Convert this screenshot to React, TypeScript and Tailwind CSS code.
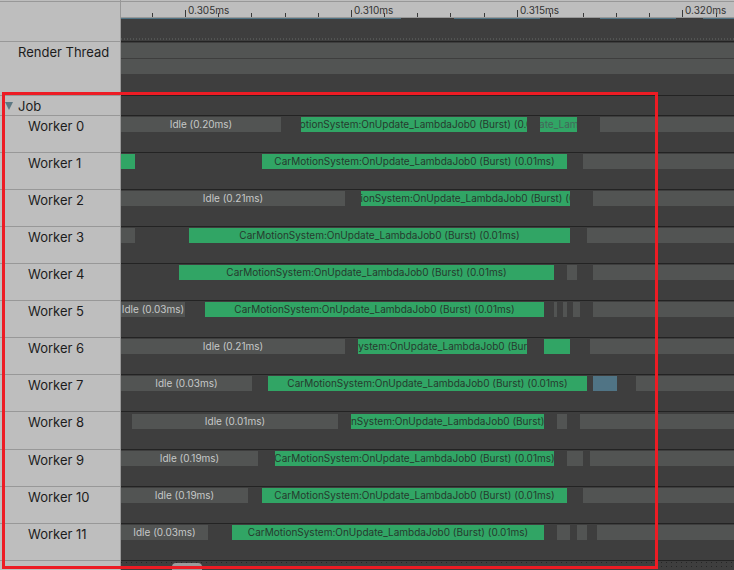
import React from "react";

type Kind = "idle" | "job" | "faint" | "sync";
type Block = { from: number; to?: number; kind: Kind; text?: string };
type Worker = { name: string; blocks: Block[]; tall?: boolean };

const JOB = "CarMotionSystem:OnUpdate_LambdaJob0 (Burst) (0.01ms)";

const idle = (from: number, to?: number, text?: string): Block => ({ from, to, kind: "idle", text });
const job = (from: number, to: number, text: string = JOB): Block => ({ from, to, kind: "job", text });

const workers: Worker[] = [
  { name: "Worker 0", blocks: [idle(0, 160, "Idle (0.20ms)"), job(180, 406), { from: 419, to: 456, kind: "faint", text: JOB }, idle(479)] },
  { name: "Worker 1", blocks: [job(0, 14, ""), job(141, 446), idle(462)] },
  { name: "Worker 2", blocks: [idle(0, 224, "Idle (0.21ms)"), job(240, 449), idle(472)] },
  { name: "Worker 3", blocks: [idle(0, 14), job(68, 449), idle(466)] },
  { name: "Worker 4", blocks: [job(58, 433), idle(446, 456), idle(472)] },
  { name: "Worker 5", blocks: [idle(0, 64, "Idle (0.03ms)"), job(84, 423), idle(433, 436), idle(442, 446), idle(452, 459), idle(472)] },
  { name: "Worker 6", blocks: [idle(0, 224, "Idle (0.21ms)"), job(237, 406), job(423, 449, ""), idle(469)] },
  { name: "Worker 7", blocks: [idle(0, 131, "Idle (0.03ms)"), job(147, 466), { from: 472, to: 496, kind: "sync" }, idle(515)] },
  { name: "Worker 8", tall: true, blocks: [idle(11, 217, "Idle (0.01ms)"), job(230, 423), idle(436, 446), idle(459)] },
  { name: "Worker 9", blocks: [idle(0, 137, "Idle (0.19ms)"), job(154, 433), idle(446, 462), idle(469)] },
  { name: "Worker 10", blocks: [idle(0, 127, "Idle (0.19ms)"), job(141, 446), idle(462)] },
  { name: "Worker 11", blocks: [idle(0, 87, "Idle (0.03ms)"), job(111, 423), idle(436, 449), idle(456, 466), idle(476)] },
];

const tone: Record<Kind, string> = {
  idle: "bg-[#525453] text-[#c6c8c8]",
  job: "bg-[#31a565] text-[#263a2e]",
  faint: "bg-[#31a565] text-[#44665a]",
  sync: "bg-[#507485]",
};

function Track({ blocks }: { blocks: Block[] }) {
  return (
    <div className="flex h-[15px] w-full overflow-hidden">
      {blocks.map((b, i) => {
        const previous = i === 0 ? 0 : blocks[i - 1].to ?? 0;
        const size = b.to === undefined ? "flex-1" : "shrink-0";
        return (
          <div
            key={i}
            className={`flex justify-center overflow-hidden text-[10px] leading-[15px] whitespace-nowrap ${size} ${tone[b.kind]}`}
            style={{ marginLeft: b.from - previous, width: b.to === undefined ? undefined : b.to - b.from }}
          >
            <span className="shrink-0">{b.text}</span>
          </div>
        );
      })}
    </div>
  );
}

function Row({ label, children, height, indent }: { label: React.ReactNode; children?: React.ReactNode; height: string; indent: string }) {
  return (
    <div className={`flex ${height}`}>
      <div className={`w-[121px] shrink-0 border-t border-r border-[#989898] bg-[#bebebe] text-[13px] leading-5 text-[#1c1c1c] ${indent}`}>
        {label}
      </div>
      <div className="min-w-0 flex-1 overflow-hidden border-t border-[#232323] pt-px">{children}</div>
    </div>
  );
}

const ticks = Array.from({ length: 18 }, (_, i) => ({
  x: Math.round(31 + i * 33.15),
  label: i % 5 === 1 ? `0.${305 + i - 1}ms` : "",
}));

function Ruler() {
  return (
    <svg className="block h-[15px] w-full" aria-label="Time ruler">
      {ticks.map((t) => (
        <g key={t.x}>
          <rect x={t.x} y={t.label ? 8 : 11} width="1" height={t.label ? 7 : 4} fill="#3a3a3a" />
          {t.label && (
            <text x={t.x + 3} y="12" fontSize="10" fill="#333333">
              {t.label}
            </text>
          )}
        </g>
      ))}
    </svg>
  );
}

export default function App() {
  return (
    <main className="relative h-screen overflow-hidden bg-[#3e3e3e] font-['Inter',sans-serif]">
      <div className="flex h-[41px]">
        <div className="w-[121px] shrink-0 border-r border-[#989898] bg-[#bebebe] pt-px">
          <div className="h-px bg-[#989898]" />
        </div>
        <div className="min-w-0 flex-1">
          <div className="bg-[#bebebe] pt-px">
            <div className="h-px bg-[#989898]" />
            <Ruler />
            <div className="h-px bg-[#989898]" />
          </div>
          <div className="flex h-px overflow-hidden">
            <div className="w-[280px] shrink-0 bg-[#507485]" />
            <div className="ml-[53px] w-[86px] shrink-0 bg-[#507485]" />
            <div className="ml-[60px] w-[76px] shrink-0 bg-[#507485]" />
            <div className="ml-[27px] flex-1 bg-[#507485]" />
          </div>
          <div className="mt-[19px] h-[2px] bg-[repeating-linear-gradient(90deg,#525453_0_1px,#3e3e3e_1px_3px)]" />
        </div>
      </div>

      <Row label="Render Thread" height="h-[54px]" indent="pl-[18px]">
        <div className="h-[15px] bg-[#525453]" />
        <div className="mt-px h-[15px] bg-[#525453]" />
      </Row>

      <Row
        height="h-5"
        indent="pl-[5px]"
        label={
          <button type="button" className="flex items-center gap-[5px]">
            <svg className="h-2 w-2" viewBox="0 0 8 8" aria-hidden="true">
              <path d="M0 0h8L4 8z" fill="#5d7883" />
            </svg>
            <span>Job</span>
          </button>
        }
      />

      {workers.map((w) => (
        <Row key={w.name} label={w.name} height={w.tall ? "h-[38px]" : "h-[37px]"} indent="pl-7">
          <div className={w.tall ? "pt-px" : ""}>
            <Track blocks={w.blocks} />
          </div>
        </Row>
      ))}

      <Row label="" height="h-5" indent="pl-7">
        <div className="flex h-5 bg-[repeating-linear-gradient(0deg,#3e3e3e_0_3px,transparent_3px_4px),repeating-linear-gradient(90deg,#262626_0_1px,#3e3e3e_1px_5px)]">
          <div className="mt-px ml-[51px] w-[30px] rounded-t-[4px] bg-[#9c9c9c]" />
        </div>
      </Row>

      <div className="pointer-events-none absolute top-[92px] left-[2px] h-[477px] w-[656px] border-[3px] border-[#ed1c24]" />
    </main>
  );
}
